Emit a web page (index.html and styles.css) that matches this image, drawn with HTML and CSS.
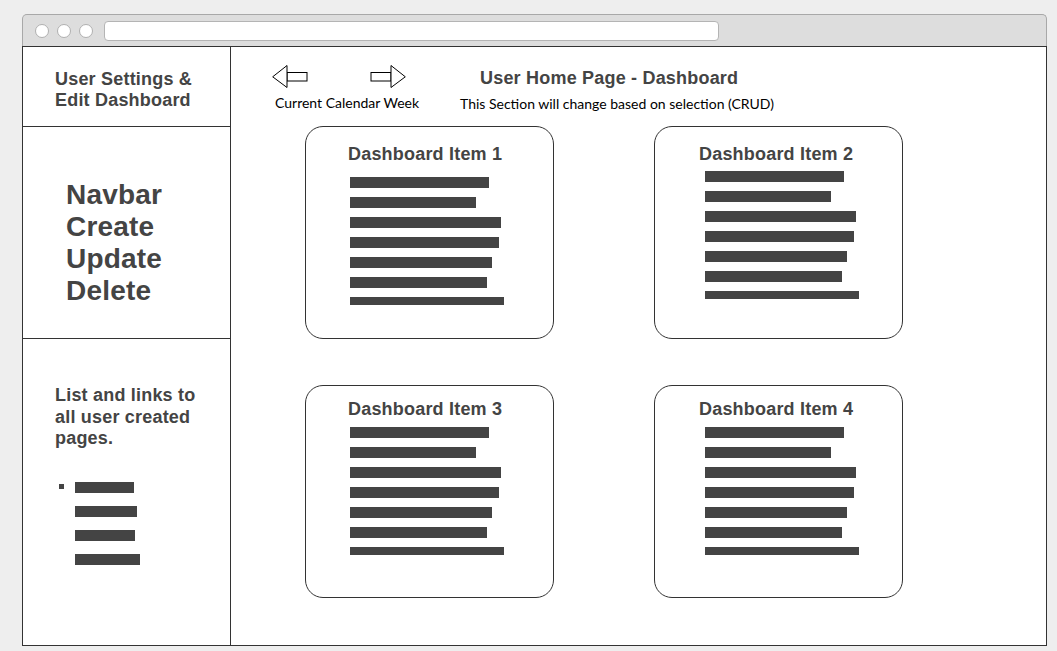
FILE: index.html
```html
<!DOCTYPE html>
<html>
<head>
<meta charset="utf-8">
<link rel="stylesheet" href="styles.css">
</head>
<body>
<div class="window">
  <div class="titlebar">
    <span class="dot"></span><span class="dot"></span><span class="dot"></span>
    <div class="urlbar"></div>
  </div>
  <div class="content">
    <aside class="sidebar">
      <div class="side-top">User Settings &amp;<br>Edit Dashboard</div>
      <div class="side-mid">Navbar<br>Create<br>Update<br>Delete</div>
      <div class="side-bottom">
        <div class="side-text">List and links to<br>all user created<br>pages.</div>
        <ul class="pages">
          <li class="first"><span class="bar-s" style="width:59px"></span></li>
          <li><span class="bar-s" style="width:62px"></span></li>
          <li><span class="bar-s" style="width:60px"></span></li>
          <li><span class="bar-s" style="width:65px"></span></li>
        </ul>
      </div>
    </aside>
    <main class="main">
      <header class="header">
        <div class="weeknav">
          <div class="arrows">
            <svg width="36" height="24" viewBox="0 0 36 24"><rect x="15" y="7.5" width="20" height="8.5" fill="#fff" stroke="#000"/><path d="M15 0.5 L0.7 11.8 L15 22.5 Z" fill="#fff" stroke="#000"/></svg>
            <svg width="36" height="24" viewBox="0 0 36 24"><rect x="1" y="7.5" width="20" height="8.5" fill="#fff" stroke="#000"/><path d="M21 0.5 L35.3 11.8 L21 22.5 Z" fill="#fff" stroke="#000"/></svg>
          </div>
          <div class="caption">Current Calendar Week</div>
        </div>
        <div class="titles">
          <h1 class="title">User Home Page - Dashboard</h1>
          <div class="caption">This Section will change based on selection (CRUD)</div>
        </div>
      </header>
      <section class="grid">
        <div class="card c1">
          <h2 class="card-title">Dashboard Item 1</h2>
          <div class="bars">
            <span class="bar" style="width:139px"></span>
            <span class="bar" style="width:126px"></span>
            <span class="bar" style="width:151px"></span>
            <span class="bar" style="width:149px"></span>
            <span class="bar" style="width:142px"></span>
            <span class="bar" style="width:137px"></span>
            <span class="bar last" style="width:154px"></span>
          </div>
        </div>
        <div class="card c2">
          <h2 class="card-title">Dashboard Item 2</h2>
          <div class="bars">
            <span class="bar" style="width:139px"></span>
            <span class="bar" style="width:126px"></span>
            <span class="bar" style="width:151px"></span>
            <span class="bar" style="width:149px"></span>
            <span class="bar" style="width:142px"></span>
            <span class="bar" style="width:137px"></span>
            <span class="bar last" style="width:154px"></span>
          </div>
        </div>
        <div class="card c3">
          <h2 class="card-title">Dashboard Item 3</h2>
          <div class="bars">
            <span class="bar" style="width:139px"></span>
            <span class="bar" style="width:126px"></span>
            <span class="bar" style="width:151px"></span>
            <span class="bar" style="width:149px"></span>
            <span class="bar" style="width:142px"></span>
            <span class="bar" style="width:137px"></span>
            <span class="bar last" style="width:154px"></span>
          </div>
        </div>
        <div class="card c4">
          <h2 class="card-title">Dashboard Item 4</h2>
          <div class="bars">
            <span class="bar" style="width:139px"></span>
            <span class="bar" style="width:126px"></span>
            <span class="bar" style="width:151px"></span>
            <span class="bar" style="width:149px"></span>
            <span class="bar" style="width:142px"></span>
            <span class="bar" style="width:137px"></span>
            <span class="bar last" style="width:154px"></span>
          </div>
        </div>
      </section>
    </main>
  </div>
</div>
</body>
</html>
```

FILE: styles.css
```css
* { box-sizing: border-box; }
html, body { margin: 0; padding: 0; }
body {
  background: #eeeeee;
  font-family: "Liberation Sans", Arial, sans-serif;
  color: #444;
  width: 1057px;
  height: 651px;
  overflow: hidden;
}
.window {
  margin: 14px 0 0 22px;
  width: 1025px;
}
.titlebar {
  height: 32px;
  background: #dddddd;
  border: 1px solid #a8a8a8;
  border-bottom: none;
  border-radius: 5px 5px 0 0;
  display: flex;
  align-items: center;
  padding-left: 12px;
  padding-top: 1px;
}
.dot {
  width: 14px;
  height: 14px;
  border-radius: 50%;
  background: #fff;
  border: 1px solid #b0b0b0;
  margin-right: 8px;
}
.urlbar {
  margin-left: 3px;
  width: 615px;
  height: 20px;
  background: #fff;
  border: 1px solid #b4b4b4;
  border-radius: 4px;
}
.content {
  display: flex;
  height: 600px;
  border: 1px solid #333;
  background: #fff;
}
.sidebar {
  width: 208px;
  border-right: 1px solid #333;
  display: flex;
  flex-direction: column;
  font-weight: bold;
  letter-spacing: 0.2px;
}
.side-top {
  height: 80px;
  border-bottom: 1px solid #333;
  padding: 22px 0 0 32px;
  font-size: 18px;
  line-height: 21px;
}
.side-mid {
  height: 212px;
  border-bottom: 1px solid #333;
  padding: 52px 0 0 43px;
  font-size: 28px;
  line-height: 32px;
}
.side-bottom {
  flex: 1;
  padding: 46px 0 0 32px;
}
.side-text {
  font-size: 18px;
  line-height: 21.5px;
}
.pages {
  list-style: none;
  margin: 32px 0 0 0;
  padding: 0 0 0 20px;
}
.pages li {
  height: 24px;
  position: relative;
}
.pages li.first::before {
  content: "";
  position: absolute;
  left: -16px;
  top: 2px;
  width: 5px;
  height: 5px;
  background: #444;
}
.bar-s {
  display: block;
  height: 11px;
  background: #444;
}
.main {
  flex: 1;
  display: flex;
  flex-direction: column;
}
.header {
  height: 79px;
  display: flex;
  padding-left: 41px;
}
.weeknav {
  padding-top: 18px;
  width: 188px;
}
.arrows {
  display: flex;
  gap: 62px;
  height: 24px;
}
.arrows svg { display: block; }
.caption {
  font-family: "Lato", "Open Sans", sans-serif;
  font-size: 14px;
  line-height: 16px;
  color: #000;
  white-space: nowrap;
}
.weeknav .caption {
  margin-top: 6px;
  padding-left: 3px;
}
.titles {
  padding-top: 21px;
  width: 320px;
}
.title {
  margin: 0;
  font-size: 18px;
  line-height: 21px;
  font-weight: bold;
  color: #444;
  padding-left: 20px;
  letter-spacing: 0.2px;
}
.titles .caption {
  margin-top: 7px;
}
.grid {
  display: grid;
  grid-template-columns: 249px 249px;
  grid-template-rows: 213px 213px;
  column-gap: 100px;
  row-gap: 46px;
  padding-left: 74px;
}
.card {
  border: 1px solid #333;
  border-radius: 18px;
  padding-top: 17px;
}
.card-title {
  margin: 0;
  font-size: 18px;
  line-height: 21px;
  font-weight: bold;
  color: #444;
  padding-left: 42px;
  letter-spacing: 0.2px;
}
.c2 .card-title, .c4 .card-title { padding-left: 44px; }
.bars {
  display: flex;
  flex-direction: column;
  gap: 9px;
  padding-left: 44px;
  margin-top: 12px;
}
.c2 .bars, .c4 .bars { padding-left: 50px; margin-top: 6px; }
.c3, .c4 { padding-top: 13px; }
.c3 .bars, .c4 .bars { margin-top: 7px; }
.bar {
  display: block;
  height: 11px;
  background: #444;
}
.bar.last { height: 8px; }
```
